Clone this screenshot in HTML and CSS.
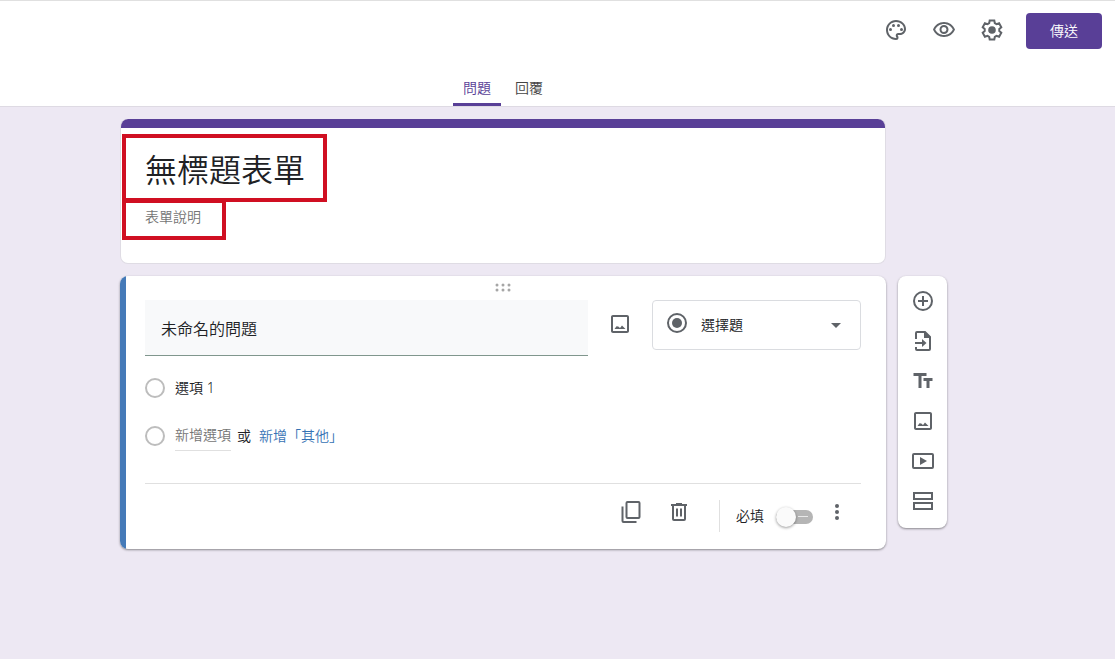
FILE: index.html
```
<!DOCTYPE html>
<html lang="zh-Hant">
<head>
<meta charset="utf-8">
<meta name="viewport" content="width=device-width, initial-scale=1">
<title>無標題表單</title>
<link rel="stylesheet" href="styles.css">
</head>
<body>
<svg class="sprite" aria-hidden="true">
  <symbol id="image" viewBox="0 0 24 24"><path d="M19 5v14H5V5h14m0-2H5c-1.100 0-2 .9-2 2v14c0 1.100.9 2 2 2h14c1.100 0 2-.9 2-2V5c0-1.100-.9-2-2-2zm-5 10.500l-2 2.600-1.700-1.600L8.500 14.300 6.500 17h11z"/></symbol>
</svg>
<header class="topbar">
  <div class="actions">
    <button class="icon-button" aria-label="自訂主題"><svg viewBox="0 0 24 24"><path d="M12 22C6.490 22 2 17.510 2 12S6.490 2 12 2s10 4.040 10 9c0 3.310-2.690 6-6 6h-1.770c-.28 0-.5.22-.5.5 0 .12.05.23.13.33.41.47.64 1.060.64 1.670A2.500 2.500 0 0 1 12 22zm0-18c-4.410 0-8 3.590-8 8s3.590 8 8 8c.28 0 .5-.22.5-.5a.54.54 0 0 0-.14-.35c-.41-.46-.63-1.050-.63-1.650a2.500 2.500 0 0 1 2.500-2.500H16c2.210 0 4-1.790 4-4 0-3.860-3.590-7-8-7z"/><circle cx="6.500" cy="11.500" r="1.500"/><circle cx="9.500" cy="7.500" r="1.500"/><circle cx="14.500" cy="7.500" r="1.500"/><circle cx="17.500" cy="11.500" r="1.500"/></svg></button>
    <button class="icon-button" aria-label="預覽"><svg viewBox="0 0 24 24"><path d="M12 4C7 4 2.730 7.110 1 11.500 2.730 15.890 7 19 12 19s9.270-3.110 11-7.500C21.270 7.110 17 4 12 4zm0 13c-3.790 0-7.170-2.130-8.820-5.500C4.830 8.130 8.210 6 12 6s7.170 2.130 8.820 5.500C19.170 14.870 15.790 17 12 17zm0-10a4.500 4.500 0 1 0 0 9 4.500 4.500 0 0 0 0-9zm0 7a2.500 2.500 0 1 1 0-5 2.500 2.500 0 0 1 0 5z"/></svg></button>
    <button class="icon-button" aria-label="設定"><svg viewBox="0 0 24 24"><path class="stroke" d="M9.700 3h4.600l.5 2.700 1.700 1 2.600-.9 2.200 3.900-2 1.800v2l2 1.800-2.200 3.900-2.600-.9-1.700 1-.5 2.700H9.700l-.5-2.700-1.700-1-2.600.9-2.200-3.900 2-1.800v-2l-2-1.800 2.200-3.900 2.600.9 1.700-1z" transform="translate(0 -.5)"/><circle cx="12" cy="12" r="3.800"/></svg></button>
    <button class="send">傳送</button>
  </div>
  <nav class="tabs">
    <button class="tab tab-active">問題</button>
    <button class="tab">回覆</button>
  </nav>
</header>
<main class="workspace">
  <div class="cards">
    <section class="card form-card">
      <input class="form-title" aria-label="表單標題" value="無標題表單">
      <input class="form-description" aria-label="表單說明" placeholder="表單說明">
      <div class="mark mark-title"></div>
      <div class="mark mark-description"></div>
    </section>
    <section class="card question-card">
      <div class="question-body">
        <svg class="handle" viewBox="0 0 16 10"><circle cx="2" cy="2" r="1.500"/><circle cx="8" cy="2" r="1.500"/><circle cx="14" cy="2" r="1.500"/><circle cx="2" cy="7" r="1.500"/><circle cx="8" cy="7" r="1.500"/><circle cx="14" cy="7" r="1.500"/></svg>
        <div class="question-row">
          <input class="question-input" aria-label="問題" value="未命名的問題">
          <button class="icon-button add-image" aria-label="新增圖片"><svg><use href="#image"/></svg></button>
          <div class="type-picker">
            <svg class="type-icon" viewBox="0 0 24 24"><circle class="stroke" cx="12" cy="12" r="9"/><circle cx="12" cy="12" r="5"/></svg>
            <select class="type-select" aria-label="問題類型"><option>選擇題</option></select>
            <svg class="caret" viewBox="0 0 24 24"><path d="M7 10l5 5 5-5z"/></svg>
          </div>
        </div>
        <div class="options">
          <div class="option"><input class="radio" type="radio" name="choice" id="choice-1"><label for="choice-1">選項 1</label></div>
          <div class="option"><input class="radio" type="radio" name="choice" id="choice-new" aria-label="新增選項"><button class="add-option">新增選項</button><span>或</span><button class="add-other">新增「其他」</button></div>
        </div>
        <div class="question-footer">
          <button class="icon-button" aria-label="複製"><svg viewBox="0 0 24 24"><path class="stroke" d="M8.500 2h11q1 0 1 1v14q0 1-1 1h-11q-1 0-1-1V3q0-1 1-1zM3.500 6.500V21q0 1 1 1h13"/></svg></button>
          <button class="icon-button" aria-label="刪除"><svg viewBox="0 0 24 24"><path class="stroke" d="M4 5h16M9 4h6M6 5v14q0 1 1 1h10q1 0 1-1V5M10 8.500v8M14 8.500v8"/></svg></button>
          <div class="required">
            <label for="required">必填</label>
            <input class="toggle" type="checkbox" role="switch" id="required">
          </div>
          <button class="icon-button" aria-label="更多選項"><svg viewBox="0 0 24 24"><circle cx="12" cy="6" r="2"/><circle cx="12" cy="12" r="2"/><circle cx="12" cy="18" r="2"/></svg></button>
        </div>
      </div>
    </section>
  </div>
  <aside class="toolbar">
    <button class="icon-button" aria-label="新增問題"><svg viewBox="0 0 24 24"><circle class="stroke" cx="12" cy="12" r="9"/><path class="stroke" d="M12 7v10M7 12h10"/></svg></button>
    <button class="icon-button" aria-label="匯入問題"><svg viewBox="0 0 24 24"><path class="stroke" d="M5 10V4q0-1 1-1h8l5 5v12q0 1-1 1H6q-1 0-1-1v-2"/><path d="M13 2v7h7z"/><path class="stroke" d="M4 14h9"/><path d="M11 10l4.500 4-4.500 4z"/></svg></button>
    <button class="icon-button" aria-label="新增標題與說明"><svg viewBox="0 0 24 24"><path d="M2.500 4v3h5v12h3V7h5V4zM12.500 9v3h3v7h3v-7h3V9z"/></svg></button>
    <button class="icon-button" aria-label="新增圖片"><svg><use href="#image"/></svg></button>
    <button class="icon-button" aria-label="新增影片"><svg viewBox="0 0 24 24"><rect class="stroke" x="2" y="5" width="20" height="14" rx="1"/><path d="M9 8v8l7-4z"/></svg></button>
    <button class="icon-button" aria-label="新增區段"><svg viewBox="0 0 24 24"><path class="stroke" d="M3 4h18v6H3zM3 14h18v6H3z"/></svg></button>
  </aside>
</main>
</body>
</html>
```
FILE: styles.css
```
* { box-sizing: border-box; }

body {
  margin: 0;
  min-height: 100vh;
  background: #ede8f3;
  color: #202124;
  font: 350 14px/20px "Noto Sans", "Noto Sans CJK TC", sans-serif;
}

button, input, select { font: inherit; color: inherit; }

button {
  border: 0;
  padding: 0;
  background: none;
  cursor: pointer;
}

input, select { outline: 0; }

svg { display: block; fill: #5f6368; }

.stroke { fill: none; stroke: #5f6368; stroke-width: 2; }

.sprite { position: absolute; width: 0; height: 0; }

.icon-button { flex: none; width: 24px; height: 24px; }
.icon-button svg { width: 24px; height: 24px; }

.topbar {
  background: #fff;
  border-top: 1px solid #e0e0e0;
  border-bottom: 1px solid #dedae3;
}

.actions {
  display: flex;
  justify-content: flex-end;
  align-items: center;
  gap: 24px;
  padding: 12px 13px 0;
}

.actions .icon-button { margin-bottom: 2px; }

.send {
  width: 76px;
  height: 36px;
  margin-left: -2px;
  border-radius: 4px;
  background: #593f97;
  color: #fff;
}

.tabs {
  display: flex;
  justify-content: center;
  gap: 4px;
  padding: 21px 109px 0 0;
}

.tab {
  height: 36px;
  padding: 2px 10px 0;
  border-bottom: 3px solid transparent;
  color: #444;
}

.tab-active {
  border-bottom-color: #593f97;
  color: #593f97;
}

.workspace {
  display: flex;
  justify-content: center;
  align-items: flex-end;
  gap: 12px;
  padding: 12px 48px 24px 0;
}

.cards {
  display: flex;
  flex-direction: column;
  gap: 12px;
  flex: 0 1 766px;
}

.card {
  background: #fff;
  border-radius: 8px;
}

.form-card {
  position: relative;
  display: flex;
  flex-direction: column;
  padding: 18px 24px 32px;
  border: 1px solid #dfdce4;
  border-top: 0;
  background: linear-gradient(#593f97 9px, #fff 9px);
}

.form-title {
  height: 65px;
  border: 0;
  padding: 0 0 4px;
  background: none;
  font-size: 32px;
  line-height: 48px;
}

.form-description {
  height: 29px;
  border: 0;
  padding: 0;
  background: none;
}

.form-description::placeholder { color: #757575; opacity: 1; }

.mark {
  position: absolute;
  left: 1px;
  border: 4px solid #d00f22;
  pointer-events: none;
}

.mark-title { top: 15px; width: 205px; height: 68px; }
.mark-description { top: 80px; width: 104px; height: 41px; }

.question-card {
  display: flex;
  overflow: hidden;
  box-shadow: 0 1px 2px #0000004d, 0 1px 3px #00000026;
}

.question-card::before {
  content: "";
  flex: none;
  width: 6px;
  background: #457ab8;
}

.question-body { flex: 1; min-width: 0; padding: 7px 25px 0 19px; }

.handle {
  width: 16px;
  height: 10px;
  margin: 0 auto 7px;
  fill: #a6a6a6;
}

.question-row { display: flex; gap: 20px; align-items: flex-start; }

.question-input {
  flex: 1;
  min-width: 0;
  height: 56px;
  padding: 0 16px;
  border: 0;
  border-bottom: 1px solid #80968d;
  background: #f8f9fa;
  font-size: 16px;
}

.add-image { margin-top: 12px; }

.type-picker {
  display: flex;
  align-items: center;
  flex: 0 0 209px;
  height: 50px;
  padding: 0 12px;
  border: 1px solid #dadce0;
  border-radius: 4px;
}

.type-icon { width: 24px; height: 24px; margin-bottom: 4px; }

.type-select {
  flex: 1;
  height: 48px;
  padding: 0 0 0 12px;
  border: 0;
  background: none;
  appearance: none;
}

.caret { width: 24px; height: 24px; pointer-events: none; }

.options { padding: 8px 0 24px; }

.option { display: flex; align-items: center; height: 48px; }
.option + .option { height: 47px; }

.radio {
  appearance: none;
  width: 20px;
  height: 20px;
  margin: 0 10px 0 0;
  border: 2px solid #bdbdbd;
  border-radius: 50%;
}

.add-option {
  height: 30px;
  margin-right: 6px;
  border-bottom: 1px solid #e0e0e0;
  color: #757575;
}

.add-other { margin-left: 8px; color: #3672b4; }

.question-footer {
  display: flex;
  justify-content: flex-end;
  align-items: flex-start;
  gap: 24px;
  padding: 16px 12px 17px 0;
  border-top: 1px solid #e0e0e0;
}

.required {
  display: flex;
  align-items: center;
  gap: 12px;
  height: 32px;
  margin: 0 -12px 0 4px;
  padding-left: 16px;
  border-left: 1px solid #e0e0e0;
}

.toggle {
  appearance: none;
  position: relative;
  width: 37px;
  height: 14px;
  margin: 2px 0 0;
  border-radius: 7px;
  background: linear-gradient(#e8e8e8, #e8e8e8) 22px 6px / 10px 1px no-repeat #b5b5b5;
}

.toggle::before {
  content: "";
  position: absolute;
  top: -3px;
  left: 0;
  width: 20px;
  height: 20px;
  border-radius: 50%;
  background: #fafafa;
  box-shadow: 0 1px 3px #00000066;
}

.toolbar {
  display: flex;
  flex-direction: column;
  align-items: center;
  gap: 16px;
  flex: none;
  width: 49px;
  margin-bottom: 21px;
  padding: 13px 0 15px;
  border-radius: 8px;
  background: #fff;
  box-shadow: 0 1px 2px #0000004d, 0 1px 3px #00000026;
}
```
